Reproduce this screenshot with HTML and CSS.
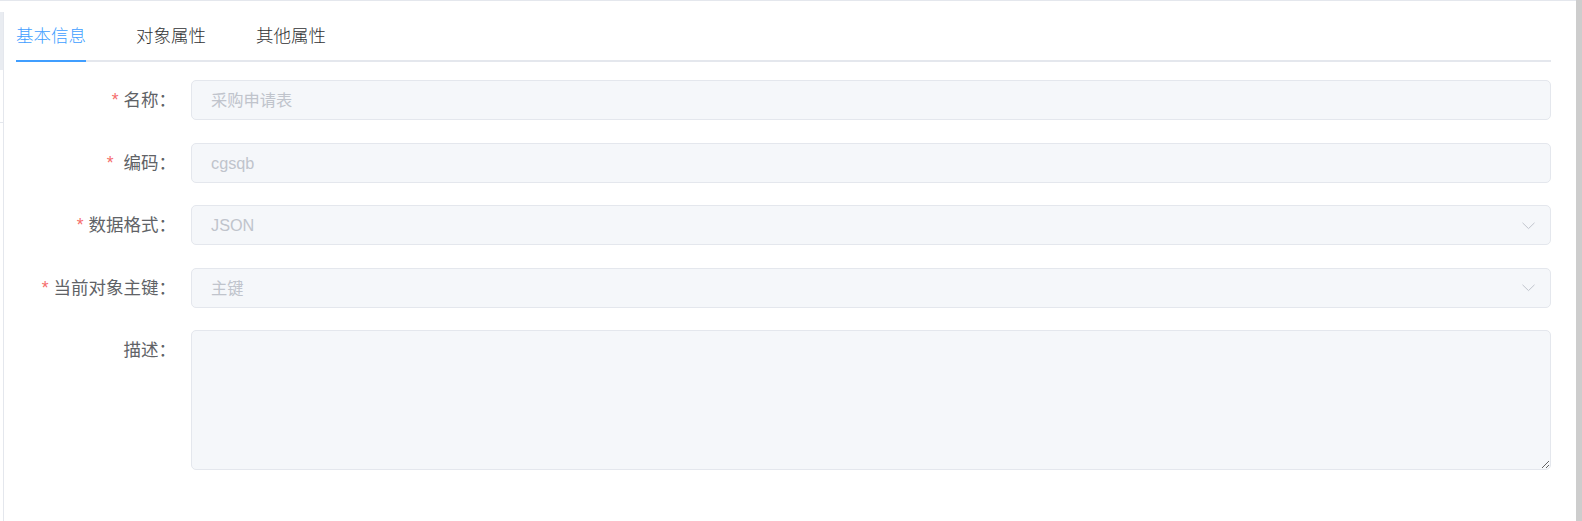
FILE: index.html
```html
<!DOCTYPE html>
<html lang="zh-CN">
<head>
<meta charset="utf-8">
<title>基本信息</title>
<link rel="stylesheet" href="styles.css">
</head>
<body>
<div class="page">
  <div class="main-col">
    <div class="topline"></div>
    <div class="main-row">
      <div class="edge">
        <div class="edge-space"></div>
        <div class="edge-block"></div>
        <div class="edge-mid"></div>
        <div class="edge-rest"></div>
      </div>
      <div class="panel">
        <div class="tabs">
          <div class="tab active">基本信息</div>
          <div class="tab">对象属性</div>
          <div class="tab">其他属性</div>
        </div>
        <div class="form">
          <div class="item">
            <div class="label"><span class="req">*</span>名称：</div>
            <div class="control"><div class="input">采购申请表</div></div>
          </div>
          <div class="item">
            <div class="label"><span class="req">*</span> 编码：</div>
            <div class="control"><div class="input">cgsqb</div></div>
          </div>
          <div class="item">
            <div class="label"><span class="req">*</span>数据格式：</div>
            <div class="control"><div class="input select"><span>JSON</span><svg class="arrow" width="13" height="8" viewBox="0 0 13 8"><polyline points="0.5,0.8 6.5,6.6 12.5,0.8" fill="none" stroke="#c0c4cc" stroke-width="1"/></svg></div></div>
          </div>
          <div class="item">
            <div class="label"><span class="req">*</span>当前对象主键：</div>
            <div class="control"><div class="input select"><span>主键</span><svg class="arrow" width="13" height="8" viewBox="0 0 13 8"><polyline points="0.5,0.8 6.5,6.6 12.5,0.8" fill="none" stroke="#c0c4cc" stroke-width="1"/></svg></div></div>
          </div>
          <div class="item">
            <div class="label">描述：</div>
            <div class="control"><textarea class="textarea" disabled></textarea></div>
          </div>
        </div>
      </div>
    </div>
  </div>
  <div class="scrollbar"></div>
</div>
</body>
</html>
```
FILE: styles.css
```css
* { box-sizing: border-box; }
html, body { margin: 0; padding: 0; background: #fff; }
body {
  font-family: "Liberation Sans", "Noto Sans CJK SC", sans-serif;
  color: #606266;
}
.page {
  display: flex;
  width: 1582px;
  height: 521px;
  overflow: hidden;
}
.main-col {
  flex: 1;
  display: flex;
  flex-direction: column;
}
.topline {
  height: 1px;
  background: #e4e7ed;
}
.main-row {
  flex: 1;
  display: flex;
}
.edge {
  width: 4px;
  display: flex;
  flex-direction: column;
}
.edge-space { height: 11px; }
.edge-block {
  height: 58px;
  background: #e9ecf1;
  border-right: 1px solid #e4e7ed;
}
.edge-mid {
  height: 53px;
  border-right: 1px solid #e4e7ed;
  border-bottom: 1px solid #e4e7ed;
}
.edge-rest {
  flex: 1;
  border-right: 1px solid #e4e7ed;
}
.panel {
  flex: 1;
  padding: 11px 25px 0 12px;
}
.tabs {
  display: flex;
  gap: 50px;
  border-bottom: 2px solid #e4e7ed;
}
.tab {
  height: 50px;
  line-height: 48px;
  font-size: 17.5px;
  font-weight: 300;
  color: #303133;
  border-bottom: 2px solid transparent;
  margin-bottom: -2px;
}
.tab.active {
  color: #409eff;
  border-bottom-color: #409eff;
}
.form {
  padding-top: 18px;
}
.item {
  display: flex;
  margin-bottom: 22.5px;
}
.label {
  width: 175px;
  flex: none;
  text-align: right;
  padding-right: 15px;
  font-size: 17.5px;
  line-height: 40px;
  color: #606266;
  white-space: pre;
}
.req {
  color: #f56c6c;
  margin-right: 5px;
}
.control { flex: 1; }
.input {
  height: 40px;
  background: #f5f7fa;
  border: 1px solid #e4e7ed;
  border-radius: 5px;
  padding: 0 15px 0 19px;
  font-size: 16.25px;
  line-height: 38px;
  color: #c0c4cc;
}
.select {
  display: flex;
  justify-content: space-between;
  align-items: center;
}
.arrow { display: block; margin-top: 1px; }
.textarea {
  display: block;
  width: 100%;
  height: 140px;
  background: #f5f7fa;
  border: 1px solid #e4e7ed;
  border-radius: 5px;
  padding: 6px 19px;
  font-family: inherit;
  font-size: 16.25px;
  color: #c0c4cc;
  resize: vertical;
  margin: 0;
}
.scrollbar {
  width: 6px;
  background: #cdcdcd;
}
```
